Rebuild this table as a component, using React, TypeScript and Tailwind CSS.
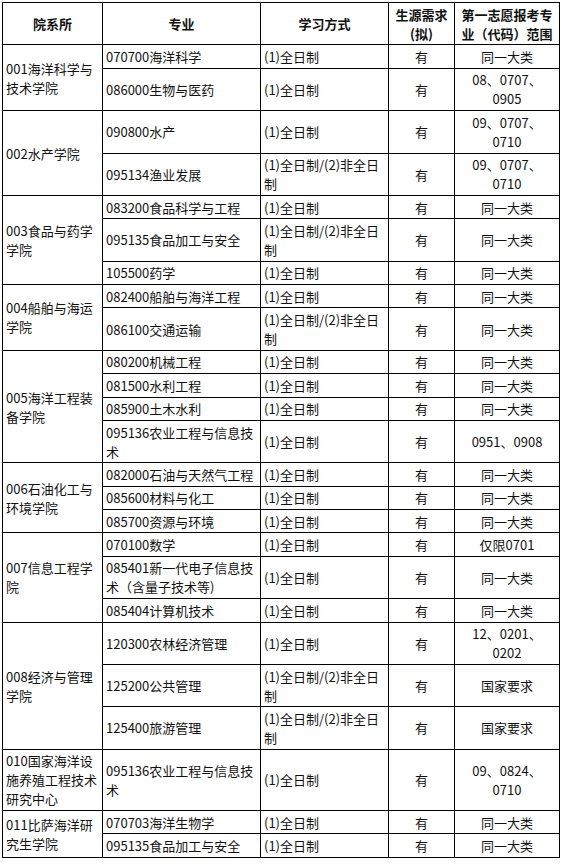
import React from "react";

interface Item {
    major: string;
    mode: string;
    need: string;
    range: React.ReactNode;
}

interface Group {
    dept: string;
    items: Item[];
}

const FULL = "(1)全日制";
const BOTH = "(1)全日制/(2)非全日制";
const SAME = "同一大类";

const groups: Group[] = [
    {
        dept: "001海洋科学与技术学院",
        items: [
            {major: "070700海洋科学", mode: FULL, need: "有", range: SAME},
            {major: "086000生物与医药", mode: FULL, need: "有", range: <>08、0707、<br/>0905</>},
        ],
    },
    {
        dept: "002水产学院",
        items: [
            {major: "090800水产", mode: FULL, need: "有", range: <>09、0707、<br/>0710</>},
            {major: "095134渔业发展", mode: BOTH, need: "有", range: <>09、0707、<br/>0710</>},
        ],
    },
    {
        dept: "003食品与药学学院",
        items: [
            {major: "083200食品科学与工程", mode: FULL, need: "有", range: SAME},
            {major: "095135食品加工与安全", mode: BOTH, need: "有", range: SAME},
            {major: "105500药学", mode: FULL, need: "有", range: SAME},
        ],
    },
    {
        dept: "004船舶与海运学院",
        items: [
            {major: "082400船舶与海洋工程", mode: FULL, need: "有", range: SAME},
            {major: "086100交通运输", mode: BOTH, need: "有", range: SAME},
        ],
    },
    {
        dept: "005海洋工程装备学院",
        items: [
            {major: "080200机械工程", mode: FULL, need: "有", range: SAME},
            {major: "081500水利工程", mode: FULL, need: "有", range: SAME},
            {major: "085900土木水利", mode: FULL, need: "有", range: SAME},
            {major: "095136农业工程与信息技术", mode: FULL, need: "有", range: "0951、0908"},
        ],
    },
    {
        dept: "006石油化工与环境学院",
        items: [
            {major: "082000石油与天然气工程", mode: FULL, need: "有", range: SAME},
            {major: "085600材料与化工", mode: FULL, need: "有", range: SAME},
            {major: "085700资源与环境", mode: FULL, need: "有", range: SAME},
        ],
    },
    {
        dept: "007信息工程学院",
        items: [
            {major: "070100数学", mode: FULL, need: "有", range: "仅限0701"},
            {major: "085401新一代电子信息技术（含量子技术等)", mode: FULL, need: "有", range: SAME},
            {major: "085404计算机技术", mode: FULL, need: "有", range: SAME},
        ],
    },
    {
        dept: "008经济与管理学院",
        items: [
            {major: "120300农林经济管理", mode: FULL, need: "有", range: <>12、0201、<br/>0202</>},
            {major: "125200公共管理", mode: BOTH, need: "有", range: "国家要求"},
            {major: "125400旅游管理", mode: BOTH, need: "有", range: "国家要求"},
        ],
    },
    {
        dept: "010国家海洋设施养殖工程技术研究中心",
        items: [
            {major: "095136农业工程与信息技术", mode: FULL, need: "有", range: <>09、0824、<br/>0710</>},
        ],
    },
    {
        dept: "011比萨海洋研究生学院",
        items: [
            {major: "070703海洋生物学", mode: FULL, need: "有", range: SAME},
            {major: "095135食品加工与安全", mode: FULL, need: "有", range: SAME},
        ],
    },
];

const cell = "border border-black px-[3px] py-[1.7px] leading-[19px] align-middle";

export default function App() {
    return (
        <div className="min-h-screen bg-white pl-[2px] pt-[2px] font-['Noto_Sans_CJK_SC',sans-serif] text-[13px] text-[#111]">
            <table className="w-[557px] table-fixed border-collapse">
                <colgroup>
                    <col className="w-[100px]"/>
                    <col className="w-[158px]"/>
                    <col className="w-[128px]"/>
                    <col className="w-[66px]"/>
                    <col className="w-[105px]"/>
                </colgroup>
                <thead>
                    <tr className="font-bold">
                        <th className={cell + " text-center"}>院系所</th>
                        <th className={cell + " text-center"}>专业</th>
                        <th className={cell + " text-center"}>学习方式</th>
                        <th className={cell + " text-center"}>生源需求(拟)</th>
                        <th className={cell + " text-center"}>第一志愿报考专业（代码）范围</th>
                    </tr>
                </thead>
                <tbody>
                    {groups.map((g) =>
                        g.items.map((it, i) => (
                            <tr key={g.dept + i}>
                                {i === 0 && (
                                    <td rowSpan={g.items.length} className={cell + " text-left"}>
                                        {g.dept}
                                    </td>
                                )}
                                <td className={cell + " text-left"}>{it.major}</td>
                                <td className={cell + " text-left"}>{it.mode}</td>
                                <td className={cell + " text-center"}>{it.need}</td>
                                <td className={cell + " text-center"}>{it.range}</td>
                            </tr>
                        ))
                    )}
                </tbody>
            </table>
        </div>
    );
}
